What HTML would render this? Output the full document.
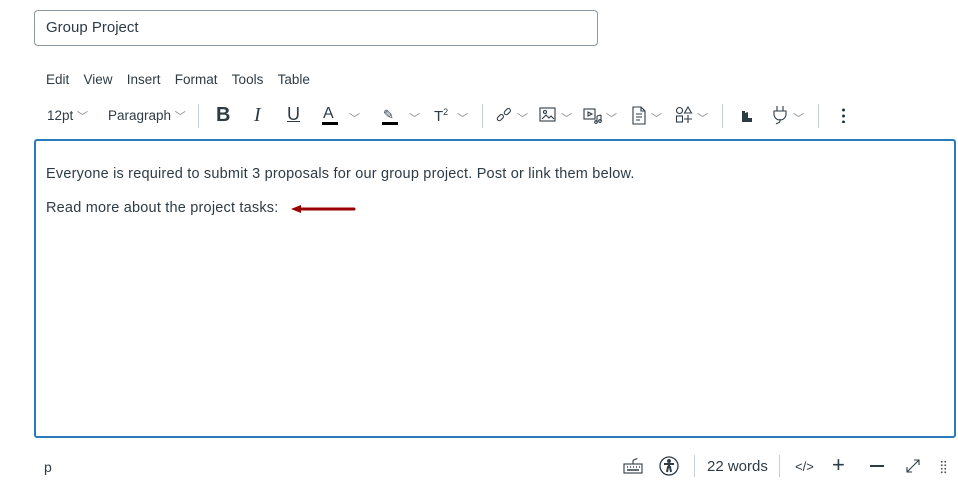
<!DOCTYPE html>
<html><head><style>
body{margin:0;width:958px;height:491px;background:#fff;font-family:"Liberation Sans",sans-serif;color:#2d3b45;position:relative;overflow:hidden}
.a{position:absolute;white-space:nowrap}
.ch{color:#888;font-size:11px}
</style></head><body>
<div class="a" style="left:34px;top:10px;width:562px;height:34px;border:1px solid #8b969e;border-radius:4px"></div>
<div class="a" style="left:46px;top:19px;font-size:15px;color:#2d3b45">Group Project</div>
<div class="a" style="left:46px;top:72px;font-size:13.5px;word-spacing:1px">Edit&nbsp;&nbsp;&nbsp;View&nbsp;&nbsp;&nbsp;Insert&nbsp;&nbsp;&nbsp;Format&nbsp;&nbsp;&nbsp;Tools&nbsp;&nbsp;&nbsp;Table</div>
<div class="a" style="left:47px;top:108px;font-size:13.5px">12pt <span class="ch">﹀</span></div>
<div class="a" style="left:108px;top:108px;font-size:13.5px">Paragraph <span class="ch">﹀</span></div>
<div class="a" style="left:198px;top:104px;width:1px;height:24px;background:#c7cdd1"></div>
<div class="a" style="left:216px;top:104px;font-size:20px;font-weight:bold">B</div>
<div class="a" style="left:254px;top:104px;font-size:20px;font-style:italic;font-family:'Liberation Serif',serif">I</div>
<div class="a" style="left:287px;top:104px;font-size:18px;text-decoration:underline">U</div>
<div class="a" style="left:323px;top:105px;font-size:16px">A</div><div class="a" style="left:322px;top:122px;width:16px;height:3px;background:#000"></div>
<div class="a ch" style="left:349px;top:110px">﹀</div>
<div class="a" style="left:383px;top:107px;font-size:13px">✎</div><div class="a" style="left:382px;top:122px;width:16px;height:3px;background:#000"></div>
<div class="a ch" style="left:409px;top:110px">﹀</div>
<div class="a" style="left:434px;top:107px;font-size:15px">T<sup style="font-size:9px">2</sup></div>
<div class="a ch" style="left:457px;top:110px">﹀</div>
<div class="a" style="left:482px;top:104px;width:1px;height:24px;background:#c7cdd1"></div>
<svg class="a" style="left:495px;top:106px" width="20" height="20" fill="none" stroke="#2d3b45" stroke-width="1.1"><rect x="2" y="10" width="7" height="4" rx="2" transform="rotate(-45 5 12)"/><rect x="9" y="4" width="7" height="4" rx="2" transform="rotate(-45 12 6)"/></svg>
<div class="a ch" style="left:517px;top:110px">﹀</div>
<svg class="a" style="left:539px;top:107px" width="18" height="16" fill="none" stroke="#2d3b45" stroke-width="1.1"><rect x="1" y="1" width="15" height="13"/><path d="M3 12l4-4 3 3 2-2 3 3"/><circle cx="6" cy="5" r="1.5"/></svg>
<div class="a ch" style="left:561px;top:110px">﹀</div>
<svg class="a" style="left:583px;top:107px" width="20" height="18" fill="none" stroke="#2d3b45" stroke-width="1.1"><rect x="1" y="2" width="11" height="10"/><path d="M5 5l4 2-4 2z"/><path d="M14 9v6M18 8v6M14 9l4-1"/><circle cx="13" cy="15" r="1.3"/><circle cx="17" cy="14" r="1.3"/></svg>
<div class="a ch" style="left:606px;top:110px">﹀</div>
<svg class="a" style="left:631px;top:106px" width="16" height="19" fill="none" stroke="#2d3b45" stroke-width="1.1"><path d="M2 1h8l4 4v13H2z M10 1v4h4"/><path d="M5 8h6M5 11h6M5 14h4"/></svg>
<div class="a ch" style="left:651px;top:110px">﹀</div>
<svg class="a" style="left:675px;top:106px" width="18" height="18" fill="none" stroke="#2d3b45" stroke-width="1.1"><circle cx="4.5" cy="4.5" r="3"/><path d="M13 1l3.5 6h-7z"/><rect x="1.5" y="10" width="6" height="6"/><path d="M13 9v8M9 13h8"/></svg>
<div class="a ch" style="left:697px;top:110px">﹀</div>
<div class="a" style="left:722px;top:104px;width:1px;height:24px;background:#c7cdd1"></div>
<svg class="a" style="left:741px;top:109px" width="14" height="14"><path d="M1 2h3v11H1zM4 4l3-1v10H4zM7 9h4v4H7z" fill="#2d3b45"/></svg>
<svg class="a" style="left:771px;top:105px" width="18" height="20" fill="none" stroke="#2d3b45" stroke-width="1.1"><path d="M6 1v5M12 1v5M3 6h12v3a6 6 0 0 1-12 0zM9 14v2c0 2-3 2-4 3"/></svg>
<div class="a ch" style="left:793px;top:110px">﹀</div>
<div class="a" style="left:818px;top:104px;width:1px;height:24px;background:#c7cdd1"></div>
<div class="a" style="left:842px;top:107px;width:3px;height:16px;background:radial-gradient(circle,#2d3b45 1.4px,transparent 1.6px) 0 0/3px 6px"></div>
<div class="a" style="left:34px;top:139px;width:918px;height:295px;border:2px solid #2b7abc;border-radius:3px"></div>
<div class="a" style="left:46px;top:166px;font-size:14.5px;letter-spacing:0.2px">Everyone is required to submit 3 proposals for our group project. Post or link them below.</div>
<div class="a" style="left:46px;top:200px;font-size:14.5px;letter-spacing:0.2px">Read more about the project tasks:</div>
<svg class="a" style="left:290px;top:203px" width="66" height="12"><path d="M8 6H64" stroke="#990000" stroke-width="3" stroke-linecap="round"/><path d="M1 6l10-4v8z" fill="#990000"/></svg>
<div class="a" style="left:44px;top:459px;font-size:14px">p</div>
<svg class="a" style="left:623px;top:458px" width="20" height="16" fill="none" stroke="#2d3b45" stroke-width="1.1"><rect x="1" y="6" width="18" height="9"/><path d="M10 6V3c0-2 4-1 4-3"/><path d="M4 9h1M7 9h1M10 9h1M13 9h1M16 9h1M4 12h12" stroke-width="1.5"/></svg>
<svg class="a" style="left:659px;top:456px" width="20" height="20" fill="none" stroke="#2d3b45" stroke-width="1.3"><circle cx="10" cy="10" r="9"/><circle cx="10" cy="5" r="1.3" fill="#2d3b45"/><path d="M5 8h10M10 8v4M8 16l1-5h2l1 5" stroke-width="2"/></svg>
<div class="a" style="left:694px;top:455px;width:1px;height:22px;background:#c7cdd1"></div>
<div class="a" style="left:707px;top:458px;font-size:15px">22 words</div>
<div class="a" style="left:779px;top:455px;width:1px;height:22px;background:#c7cdd1"></div>
<div class="a" style="left:795px;top:459px;font-size:13px">&lt;/&gt;</div>
<div class="a" style="left:832px;top:452px;font-size:22px;font-weight:300">+</div>
<div class="a" style="left:870px;top:465px;width:14px;height:2px;background:#2d3b45"></div>
<svg class="a" style="left:905px;top:458px" width="16" height="16" fill="none" stroke="#2d3b45" stroke-width="1.1"><path d="M2 14L14 2M9 2h5v5M2 9v5h5"/></svg>
<div class="a" style="left:940px;top:460px;width:7px;height:15px;background:radial-gradient(circle,#555 0.9px,transparent 1.1px) 0 0/3.5px 3.5px"></div>
</body></html>
